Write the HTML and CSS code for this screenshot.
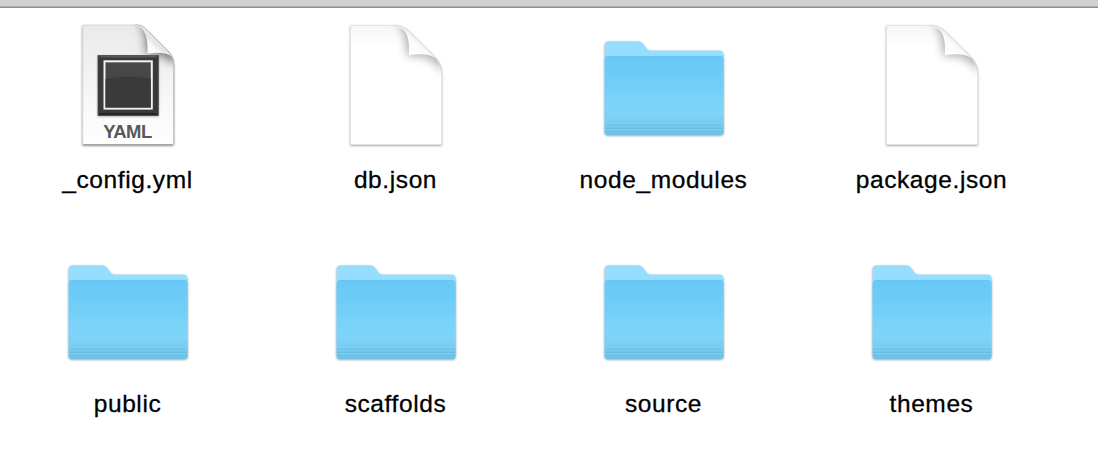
FILE: index.html
```html
<!DOCTYPE html>
<html lang="en">
<head>
<meta charset="utf-8">
<title>Files</title>
<link rel="stylesheet" href="styles.css">
</head>
<body>
<svg class="defs" aria-hidden="true">
  <defs>
    <linearGradient id="front" x1="0" y1="0" x2="0" y2="1">
      <stop offset="0" stop-color="#69c9f7"/><stop offset=".2" stop-color="#6ccbf7"/><stop offset=".62" stop-color="#7dd4f9"/><stop offset=".75" stop-color="#7dd3f8"/><stop offset=".87" stop-color="#74c9ee"/><stop offset="1" stop-color="#70c3e8"/>
    </linearGradient>
    <linearGradient id="paper" x1="0" y1="0" x2="0" y2="1">
      <stop offset="0" stop-color="#f6f6f6"/><stop offset=".2" stop-color="#fff"/>
    </linearGradient>
    <linearGradient id="grey" x1="0" y1="0" x2="0" y2="1">
      <stop offset="0" stop-color="#eaeaea"/><stop offset="1" stop-color="#fff"/>
    </linearGradient>
    <linearGradient id="curl" gradientUnits="userSpaceOnUse" x1="78" y1="31" x2="89" y2="19">
      <stop offset="0" stop-color="#fff"/><stop offset=".7" stop-color="#fbfbfb"/><stop offset="1" stop-color="#e6e6e6"/>
    </linearGradient>
    <linearGradient id="dark" x1="0" y1="0" x2="0" y2="1">
      <stop offset="0" stop-color="#4a4a4a"/><stop offset="1" stop-color="#3c3c3c"/>
    </linearGradient>
    <filter id="soft" x="-50%" y="-50%" width="200%" height="200%"><feGaussianBlur stdDeviation="5"/></filter>
    <filter id="drop" x="-10%" y="-10%" width="120%" height="125%" color-interpolation-filters="sRGB"><feDropShadow dx="0" dy="1" stdDeviation="1" flood-color="#000" flood-opacity=".35"/></filter>
    <filter id="dropheavy" x="-10%" y="-10%" width="120%" height="125%" color-interpolation-filters="sRGB"><feDropShadow dx="0" dy="1.3" stdDeviation="1.3" flood-color="#000" flood-opacity=".6"/></filter>
    <clipPath id="sheet"><path d="M18.5 3.5H62C69 3.5 73 5.5 78 10L99 31C106 38 109.6 43 109.6 52V122.5H18.5Z"/></clipPath>
    <clipPath id="sheet2"><path d="M18.5 2.8H71C76 2.8 79 4 83 8L103 28C108 33 109.7 37 109.7 43V122.3H18.5Z"/></clipPath>
    <symbol id="folder" viewBox="0 0 128 128">
      <g filter="url(#drop)">
        <path fill="#97ddfe" d="M4.6 23.5Q4.6 19.2 9 19.2H37.5C41 19.2 42.2 20.5 44 23L46.3 26.3Q47.8 28.6 50.5 28.6H119Q123.6 28.6 123.6 33V109.5Q123.6 113 120 113H8.2Q4.6 113 4.6 109.5Z"/>
        <path fill="url(#front)" d="M4.6 37.5Q4.6 34 8.2 34H120Q123.6 34 123.6 37.5V109.5Q123.6 113 120 113H8.2Q4.6 113 4.6 109.5Z"/>
      </g>
      <path stroke="#61bfe9" stroke-width=".8" opacity=".5" d="M7 34.4H121"/>
      <path stroke="#8ad6f5" stroke-width=".9" opacity=".5" d="M5 101.5H123.3M5 104.8H123.3M5 108H123.3"/>
      <path stroke="#62b7df" stroke-width="1.1" opacity=".45" d="M5 103.2H123.3M5 106.4H123.3M5 109.6H123.3M7 112.5H121"/>
    </symbol>
    <symbol id="document" viewBox="0 0 128 128">
      <path filter="url(#drop)" fill="url(#paper)" stroke="#e2e2e2" stroke-width=".8" d="M18.5 3.5H62C69 3.5 73 5.5 78 10L99 31C106 38 109.6 43 109.6 52V122.5H18.5Z"/>
      <g clip-path="url(#sheet)">
        <path filter="url(#soft)" fill="#000" opacity=".32" d="M61 1C71 2 75 11 75 34C90 33 103 35 110 51L114 28 88 0Z"/>
      </g>
      <path fill="url(#curl)" d="M62 3.5C69 3.5 73 5.5 78 10L99 31Q102 34 104 37C99 32.5 90 31.5 77 33C78 17 75 5 62 3.5Z"/>
      <path fill="none" stroke="#dadada" stroke-width=".8" d="M62 3.5C69 3.5 73 5.5 78 10L99 31C106 38 109.6 43 109.6 52"/>
    </symbol>
    <symbol id="yaml" viewBox="0 0 128 128">
      <path filter="url(#dropheavy)" fill="url(#grey)" d="M18.5 2.8H71C76 2.8 79 4 83 8L103 28C108 33 109.7 37 109.7 43V122.3H18.5Z"/>
      <g clip-path="url(#sheet2)">
        <path filter="url(#soft)" fill="#000" opacity=".5" d="M72 2C80 3 82 11 82 32C92 31 103 34 109 43L117 25 92 0Z"/>
        <path fill="none" stroke="#d2d2d2" d="M18.7 122V3H71"/>
      </g>
      <path fill="url(#curl)" d="M71 2.8C76 2.8 79 4 83 8L103 28Q106.5 31.5 108 35C103 30.5 94 30.3 83.5 31.5C84.5 17 81 5 71 2.8Z"/>
      <path fill="none" stroke="#b4b4b4" stroke-width=".8" d="M71 2.8C76 2.8 79 4 83 8L103 28C108 33 109.7 37 109.7 43V122"/>
      <g filter="url(#drop)"><rect x="33.700" y="33" width="61" height="60.500" fill="#3a3a3a"/></g>
      <path fill="#585858" d="M33.700 33H94.700L91.700 35.500H36.700Z"/>
      <path fill="#262626" d="M33.700 93.500H94.700L91.700 91H36.700Z"/>
      <rect x="40.500" y="39.300" width="47.300" height="47.300" fill="url(#dark)" stroke="#f4f4f4" stroke-width="2"/>
      <path fill="#3a3a3a" d="M41.500 57Q64 52 86.800 57V85.600H41.500Z"/>
      <text class="kind" x="63.700" y="116.300" text-anchor="middle" textLength="49">YAML</text>
    </symbol>
  </defs>
</svg>
<div class="toolbar-edge"></div>
<main class="files">
  <figure class="file"><svg class="icon"><use href="#yaml"/></svg><figcaption class="name">_config.yml</figcaption></figure>
  <figure class="file"><svg class="icon"><use href="#document"/></svg><figcaption class="name">db.json</figcaption></figure>
  <figure class="file"><svg class="icon"><use href="#folder"/></svg><figcaption class="name">node_modules</figcaption></figure>
  <figure class="file"><svg class="icon"><use href="#document"/></svg><figcaption class="name">package.json</figcaption></figure>
  <figure class="file"><svg class="icon"><use href="#folder"/></svg><figcaption class="name">public</figcaption></figure>
  <figure class="file"><svg class="icon"><use href="#folder"/></svg><figcaption class="name">scaffolds</figcaption></figure>
  <figure class="file"><svg class="icon"><use href="#folder"/></svg><figcaption class="name">source</figcaption></figure>
  <figure class="file"><svg class="icon"><use href="#folder"/></svg><figcaption class="name">themes</figcaption></figure>
</main>
</body>
</html>
```
FILE: styles.css
```css
body {
  margin: 0;
  background: #fff;
  color: #000;
  font-family: "Liberation Sans", Arial, sans-serif;
  overflow: hidden;
}
.defs {
  display: block;
  width: 0;
  height: 0;
}
.toolbar-edge {
  box-sizing: border-box;
  height: 8px;
  background: #d2d0d2;
  border-bottom: 1px solid #8f8f8f;
  box-shadow: inset 0 -1px #b2b0b2;
}
.files {
  display: grid;
  grid-template-columns: repeat(4, 128px);
  grid-auto-rows: 224px;
  column-gap: 140px;
  padding: 14px 0 0 64px;
}
.file {
  display: flex;
  flex-direction: column;
  align-items: center;
  gap: 14px;
  margin: 0;
}
.icon {
  width: 128px;
  height: 128px;
  flex: none;
}
.name {
  padding-right: 1px;
  font-size: 24.5px;
  line-height: 32px;
  letter-spacing: 0.6px;
  white-space: nowrap;
  -webkit-text-stroke: 0.3px #000;
}
.kind {
  font: bold 18.5px "Liberation Sans", Arial, sans-serif;
  fill: #585858;
}
```
